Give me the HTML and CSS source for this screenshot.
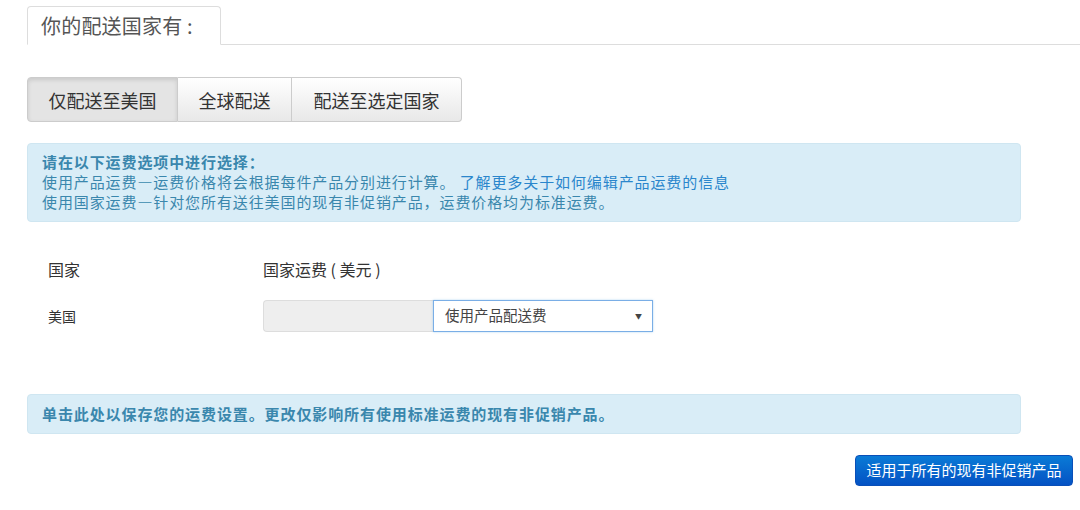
FILE: index.html
```html
<!DOCTYPE html>
<html lang="zh-CN">
<head>
<meta charset="utf-8">
<title>配送设置</title>
<link rel="stylesheet" href="styles.css">
</head>
<body>
<div class="page">
  <div class="tabs">
    <div class="tab">你的配送国家有 :</div>
  </div>

  <div class="btn-group">
    <button class="seg active">仅配送至美国</button>
    <button class="seg">全球配送</button>
    <button class="seg">配送至选定国家</button>
  </div>

  <div class="info info-main">
    <div class="info-title">请在以下运费选项中进行选择：</div>
    <div>使用产品运费—运费价格将会根据每件产品分别进行计算。 <a class="info-link" href="#">了解更多关于如何编辑产品运费的信息</a></div>
    <div>使用国家运费—针对您所有送往美国的现有非促销产品，运费价格均为标准运费。</div>
  </div>

  <div class="rates">
    <div class="rates-head">
      <div class="col-country">国家</div>
      <div class="col-fee">国家运费 ( 美元 )</div>
    </div>
    <div class="rates-row">
      <div class="col-country small">美国</div>
      <div class="col-fee">
        <div class="input-group">
          <div class="fee-input"></div>
          <div class="fee-select">
            <span>使用产品配送费</span>
            <span class="caret">▼</span>
          </div>
        </div>
      </div>
    </div>
  </div>

  <div class="info info-save">单击此处以保存您的运费设置。更改仅影响所有使用标准运费的现有非促销产品。</div>

  <div class="actions">
    <button class="btn-primary">适用于所有的现有非促销产品</button>
  </div>
</div>
</body>
</html>
```

FILE: styles.css
```css
html, body {
  margin: 0;
  padding: 0;
  background: #fff;
}

body {
  font-family: "Noto Sans CJK SC", "Liberation Sans", sans-serif;
  color: #333;
}

.page {
  padding: 6px 0 0 27px;
}

.tabs {
  display: flex;
  border-bottom: 1px solid #ddd;
  height: 38px;
}

.tab {
  box-sizing: border-box;
  width: 194px;
  height: 39px;
  padding: 0 0 0 13px;
  border: 1px solid #ddd;
  border-bottom-color: #fff;
  border-radius: 4px 4px 0 0;
  background: #fff;
  font-size: 20px;
  line-height: 37px;
  color: #555;
  letter-spacing: 0.2px;
}

.btn-group {
  display: flex;
  margin-top: 32px;
  width: max-content;
}

.seg {
  font-family: inherit;
  font-size: 18px;
  color: #333;
  height: 45px;
  padding: 0 20.5px;
  border: 1px solid #ccc;
  border-left-width: 0;
  background: linear-gradient(#ffffff, #e8e8e8);
  cursor: pointer;
}

.seg:first-child {
  border-left-width: 1px;
  border-radius: 4px 0 0 4px;
}

.seg:last-child {
  border-radius: 0 4px 4px 0;
  padding: 0 21.5px;
}

.seg.active {
  background: #e4e4e4;
  box-shadow: inset 0 2px 4px rgba(0, 0, 0, 0.12);
}

.info {
  width: 994px;
  box-sizing: border-box;
  background: #d9edf7;
  border: 1px solid #cfe6f1;
  border-radius: 4px;
  color: #3a87ad;
  font-size: 15px;
  letter-spacing: 0.9px;
  line-height: 20px;
}

.info-main {
  margin-top: 21px;
  padding: 8px 14px 9px 14px;
}

.info-title {
  font-weight: bold;
}

.info-link {
  color: #2a86cc;
  text-decoration: none;
}

.rates {
  margin-top: 28px;
  padding-left: 21px;
}

.rates-head,
.rates-row {
  display: flex;
  align-items: center;
}

.rates-head {
  height: 38px;
  font-size: 16px;
}

.rates-row {
  margin-top: 12px;
  height: 32px;
}

.col-country {
  width: 215px;
}

.small {
  font-size: 14px;
}

.input-group {
  display: flex;
  height: 32px;
}

.fee-input {
  box-sizing: border-box;
  width: 170px;
  height: 32px;
  background: #eee;
  border: 1px solid #ddd;
  border-right: 0;
  border-radius: 4px 0 0 4px;
}

.fee-select {
  box-sizing: border-box;
  width: 220px;
  height: 32px;
  display: flex;
  align-items: center;
  justify-content: space-between;
  padding: 0 10px 0 11px;
  border: 1px solid #7aaee6;
  box-shadow: 0 0 2px rgba(102, 175, 233, 0.5);
  font-size: 14.5px;
  color: #444;
  background: #fff;
}

.fee-select span:first-child {
  margin-top: -3px;
}

.caret {
  font-size: 7px;
  color: #444;
}

.info-save {
  margin-top: 62px;
  padding: 9px 14px;
  font-weight: bold;
}

.actions {
  display: flex;
  justify-content: flex-end;
  margin-top: 21px;
  padding-right: 7px;
}

.btn-primary {
  font-family: inherit;
  font-size: 15px;
  color: #fff;
  width: 218px;
  height: 31px;
  border: 1px solid #0a4fb8;
  border-radius: 4px;
  background: linear-gradient(#0a7bd6, #0452c4);
  padding: 0 0 3px 0;
  cursor: pointer;
}
```
